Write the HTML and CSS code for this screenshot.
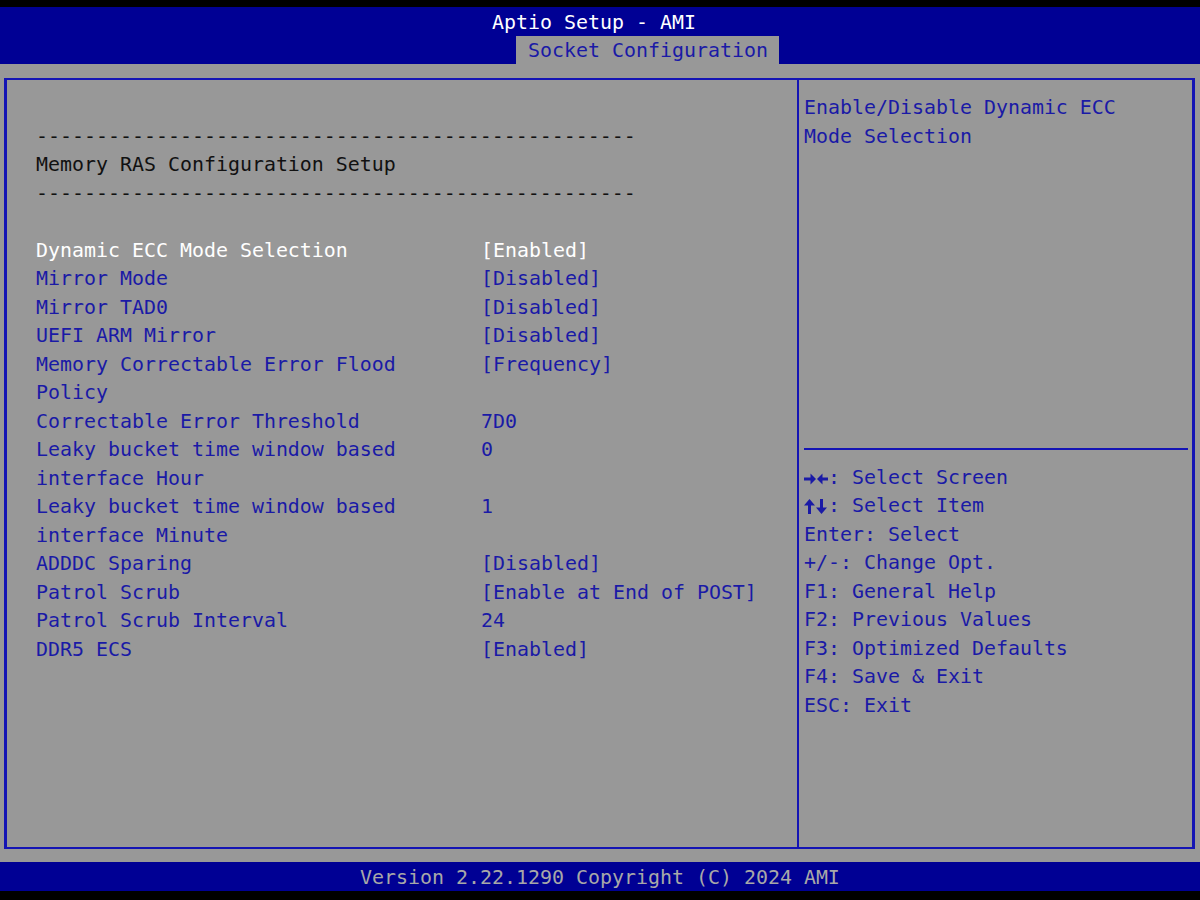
FILE: index.html
```html
<!DOCTYPE html>
<html lang="en">
<head>
  <meta charset="UTF-8">
  <title>Aptio Setup - AMI</title>
  <link rel="stylesheet" href="styles.css">
</head>
<body>

<header class="top">
  <div class="title">Aptio Setup - AMI</div>
  <div class="tabs">
    <div class="tab">Socket Configuration</div>
  </div>
</header>

<main class="screen">
  <div class="frame">
    <section class="menu">
      <div class="row"></div>
      <div class="row heading">--------------------------------------------------</div>
      <div class="row heading">Memory RAS Configuration Setup</div>
      <div class="row heading">--------------------------------------------------</div>
      <div class="row"></div>

      <div class="item selected">
        <span class="label">Dynamic ECC Mode Selection</span>
        <span class="value">[Enabled]</span>
      </div>
      <div class="item">
        <span class="label">Mirror Mode</span>
        <span class="value">[Disabled]</span>
      </div>
      <div class="item">
        <span class="label">Mirror TAD0</span>
        <span class="value">[Disabled]</span>
      </div>
      <div class="item">
        <span class="label">UEFI ARM Mirror</span>
        <span class="value">[Disabled]</span>
      </div>
      <div class="item">
        <span class="label">Memory Correctable Error Flood Policy</span>
        <span class="value">[Frequency]</span>
      </div>
      <div class="item">
        <span class="label">Correctable Error Threshold</span>
        <span class="value">7D0</span>
      </div>
      <div class="item">
        <span class="label">Leaky bucket time window based interface Hour</span>
        <span class="value">0</span>
      </div>
      <div class="item">
        <span class="label">Leaky bucket time window based interface Minute</span>
        <span class="value">1</span>
      </div>
      <div class="item">
        <span class="label">ADDDC Sparing</span>
        <span class="value">[Disabled]</span>
      </div>
      <div class="item">
        <span class="label">Patrol Scrub</span>
        <span class="value">[Enable at End of POST]</span>
      </div>
      <div class="item">
        <span class="label">Patrol Scrub Interval</span>
        <span class="value">24</span>
      </div>
      <div class="item">
        <span class="label">DDR5 ECS</span>
        <span class="value">[Enabled]</span>
      </div>
    </section>

    <aside class="help">
      <div class="help-desc">Enable/Disable Dynamic ECC Mode Selection</div>
      <div class="help-rule"></div>
      <ul class="keys">
        <li><svg class="arrows" width="24" height="12" viewBox="0 0 24 12"><!-- right / left -->
          <rect x="0" y="4.5" width="8" height="3"/>
          <polygon points="6.5,0.5 12,6 6.5,11.5"/>
          <polygon points="18.5,0.5 13,6 18.5,11.5"/>
          <rect x="17" y="4.5" width="7" height="3"/>
        </svg>: Select Screen</li>
        <li><svg class="arrows tall" width="24" height="15" viewBox="0 0 24 15"><!-- up / down -->
          <polygon points="5.5,0 11,6.5 7,6.5 7,15 4,15 4,6.5 0,6.5"/>
          <polygon points="16,0 19,0 19,8.5 23,8.5 17.5,15 12,8.5 16,8.5"/>
        </svg>: Select Item</li>
        <li>Enter: Select</li>
        <li>+/-: Change Opt.</li>
        <li>F1: General Help</li>
        <li>F2: Previous Values</li>
        <li>F3: Optimized Defaults</li>
        <li>F4: Save &amp; Exit</li>
        <li>ESC: Exit</li>
      </ul>
    </aside>
  </div>
</main>

<footer class="bottom">Version 2.22.1290 Copyright (C) 2024 AMI</footer>

</body>
</html>
```

FILE: styles.css
```css
body {
  margin: 0;
  width: 1200px;
  height: 900px;
  background: #000;
  font-family: "DejaVu Sans Mono", "Liberation Mono", monospace;
  font-size: 19.93px;
  line-height: 28.5px;
  color: #1a1aa6;
  display: flex;
  flex-direction: column;
  overflow: hidden;
}

/* title bar with the single tab */
.top {
  margin-top: 7px;
  height: 57px;
  background: #000094;
  padding-top: 2px;
  box-sizing: border-box;
}
.title {
  height: 27px;
  line-height: 27px;
  color: #fff;
  text-align: center;
  padding-right: 12px;
}
.tabs {
  display: flex;
  height: 28px;
  padding-left: 516px;
}
.tab {
  background: #989898;
  color: #1a1aa6;
  line-height: 27px;
  padding: 1px 11px 0 12px;
}

/* grey work area */
.screen {
  background: #989898;
  height: 798px;
  padding: 14px 5px 13px 4px;
  box-sizing: border-box;
}
.frame {
  height: 100%;
  box-sizing: border-box;
  border: 2px solid #1414b4;
  border-left-width: 3px;
  border-right-width: 3px;
  display: flex;
}

.menu {
  width: 790px;
  padding: 14px 0 0 29px;
  box-sizing: border-box;
}
.row {
  height: 28.5px;
  white-space: pre;
}
.heading {
  color: #111;
}
.item {
  display: grid;
  grid-template-columns: 445px 1fr;
}
.label {
  max-width: 31ch;
}
.value {
  white-space: pre;
}
.selected .label,
.selected .value {
  color: #fff;
}

/* right hand help column */
.help {
  flex: 1;
  border-left: 2px solid #1414b4;
  padding: 14px 4px 0 5px;
}
.help-desc {
  height: 341px;
  max-width: 30ch;
}
.help-rule {
  height: 2px;
  background: #1414b4;
  margin: 13.25px 0;
}
.keys {
  list-style: none;
  margin: 0;
  padding: 0;
}
.keys li {
  height: 28.5px;
  white-space: pre;
}
.arrows {
  fill: #1a1aa6;
  vertical-align: -1px;
}
.arrows.tall {
  vertical-align: -2px;
}

.bottom {
  height: 29px;
  line-height: 27px;
  padding-top: 2px;
  box-sizing: border-box;
  background: #000094;
  color: #a8a8a8;
  text-align: center;
}
```
